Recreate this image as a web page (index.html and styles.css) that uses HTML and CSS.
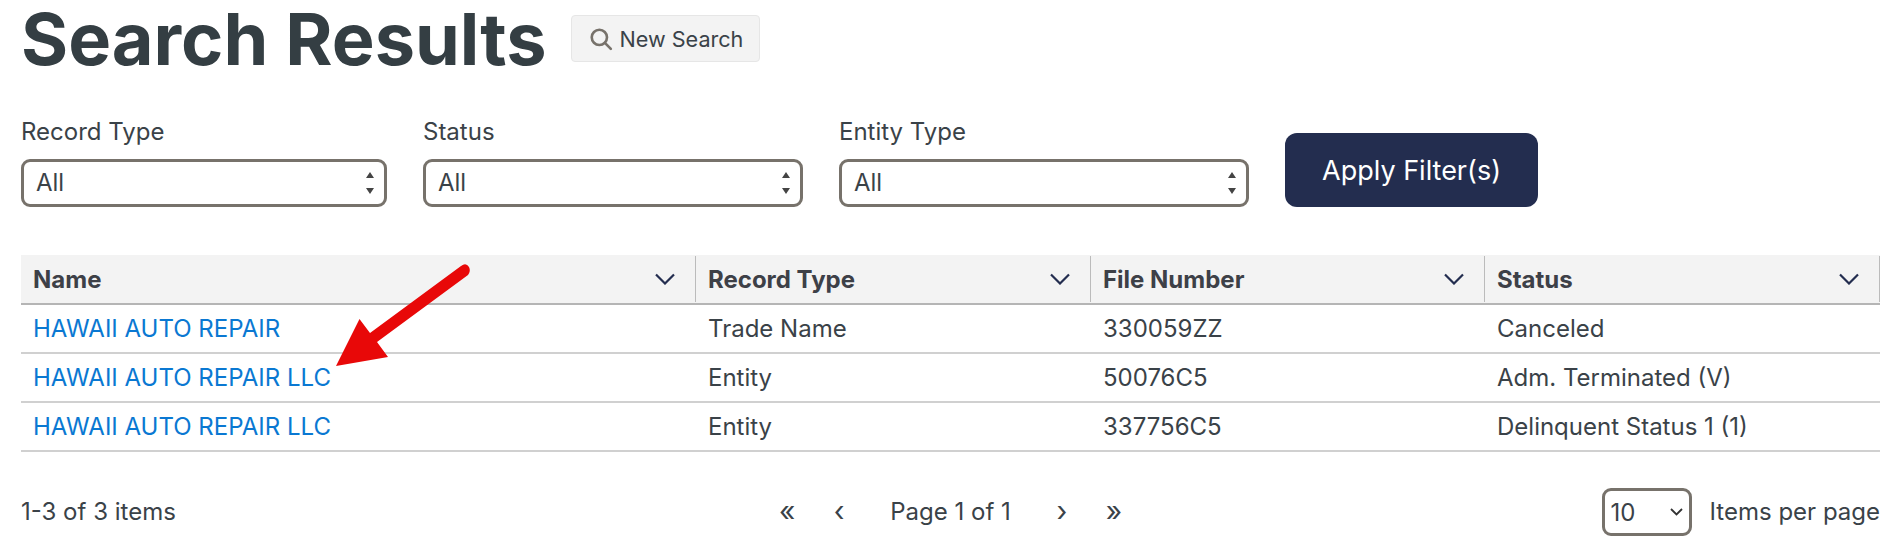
FILE: index.html
```html
<!doctype html>
<html>
    <head>
        <title>Search Results</title>
        <link rel="stylesheet" href="styles.css">
    </head>
    <body>
        <main>
            <header class="title-row">
                <h1>Search Results</h1>
                <a class="new-search" href="#">
                    <svg width="24" height="24" viewBox="0 0 22 22" fill="none" stroke="#77726b" stroke-width="2.4" stroke-linecap="round">
                        <circle cx="9.5" cy="9.5" r="7"/>
                        <line x1="14.8" y1="14.8" x2="20" y2="20"/>
                    </svg>
                    New Search
                </a>
            </header>
            <form class="filters">
                <div class="filter record">
                    <label>Record Type</label>
                    <div class="select-wrap">
                        <select><option>All</option></select>
                        <svg class="stepper" width="10" height="24" viewBox="0 0 10 24"><path d="M5 1 9 7H1zM5 23 1 17h8z" fill="#444"/></svg>
                    </div>
                </div>
                <div class="filter status">
                    <label>Status</label>
                    <div class="select-wrap">
                        <select><option>All</option></select>
                        <svg class="stepper" width="10" height="24" viewBox="0 0 10 24"><path d="M5 1 9 7H1zM5 23 1 17h8z" fill="#444"/></svg>
                    </div>
                </div>
                <div class="filter entity">
                    <label>Entity Type</label>
                    <div class="select-wrap">
                        <select><option>All</option></select>
                        <svg class="stepper" width="10" height="24" viewBox="0 0 10 24"><path d="M5 1 9 7H1zM5 23 1 17h8z" fill="#444"/></svg>
                    </div>
                </div>
                <button class="apply" type="button">Apply Filter(s)</button>
            </form>
            <div class="results">
                <table>
                    <thead>
                        <tr>
                            <th class="col-name"><div class="th-inner">Name <svg width="22" height="12" viewBox="0 0 22 12" fill="none" stroke="#232d4f" stroke-width="2.2"><path d="M2 1.500 11 10.500 20 1.500"/></svg></div></th>
                            <th class="col-type"><div class="th-inner">Record Type <svg width="22" height="12" viewBox="0 0 22 12" fill="none" stroke="#232d4f" stroke-width="2.2"><path d="M2 1.500 11 10.500 20 1.500"/></svg></div></th>
                            <th class="col-file"><div class="th-inner">File Number <svg width="22" height="12" viewBox="0 0 22 12" fill="none" stroke="#232d4f" stroke-width="2.2"><path d="M2 1.500 11 10.500 20 1.500"/></svg></div></th>
                            <th><div class="th-inner">Status <svg width="22" height="12" viewBox="0 0 22 12" fill="none" stroke="#232d4f" stroke-width="2.2"><path d="M2 1.500 11 10.500 20 1.500"/></svg></div></th>
                        </tr>
                    </thead>
                    <tbody>
                        <tr>
                            <td><a href="#">HAWAII AUTO REPAIR</a></td>
                            <td>Trade Name</td>
                            <td>330059ZZ</td>
                            <td>Canceled</td>
                        </tr>
                        <tr>
                            <td><a href="#">HAWAII AUTO REPAIR LLC</a></td>
                            <td>Entity</td>
                            <td>50076C5</td>
                            <td>Adm. Terminated (V)</td>
                        </tr>
                        <tr>
                            <td><a href="#">HAWAII AUTO REPAIR LLC</a></td>
                            <td>Entity</td>
                            <td>337756C5</td>
                            <td>Delinquent Status 1 (1)</td>
                        </tr>
                    </tbody>
                </table>
                <svg class="arrow" width="150" height="110" viewBox="326 262 150 110">
                    <path d="M461 266Q466 262 469 267Q471 271 468 275L377 342 388 357 336 366 359.500 319 370 333z" fill="#e80808"/>
                </svg>
            </div>
            <footer class="pager-row">
                <div class="count">1-3 of 3 items</div>
                <nav class="pager">
                    <a href="#">&laquo;</a>
                    <a href="#">&lsaquo;</a>
                    <span class="page-label">Page 1 of 1</span>
                    <a href="#">&rsaquo;</a>
                    <a href="#">&raquo;</a>
                </nav>
                <div class="per-page">
                    <div class="select-wrap">
                        <select><option>10</option></select>
                        <svg class="chevron" width="13" height="8" viewBox="0 0 13 8" fill="none" stroke="#333" stroke-width="1.800"><path d="M1 1 6.500 6.500 12 1"/></svg>
                    </div>
                    <span class="per-page-label">Items per page</span>
                </div>
            </footer>
        </main>
    </body>
</html>
```

FILE: styles.css
```css
html {
    background: white;
    font-family: Inter, "Liberation Sans", sans-serif;
    color: #3a4248;
}
body {
    margin: 0;
    font-size: 24px;
}
main {
    padding: 0 11px 0 21px;
}
a {
    text-decoration: none;
}
.title-row {
    display: flex;
    align-items: center;
    height: 77px;
    gap: 24px;
}
h1 {
    margin: 0;
    font-size: 72px;
    font-weight: 700;
    color: #343e43;
    line-height: 77px;
}
.new-search {
    display: flex;
    align-items: center;
    gap: 7px;
    height: 47px;
    box-sizing: border-box;
    padding: 0 16px 0 17px;
    background: #f3f3f3;
    border: 1px solid #e6e6e6;
    border-radius: 4px;
    color: #3a4248;
    font-size: 21.6px;
}
.filters {
    display: flex;
    align-items: flex-end;
    margin-top: 43px;
}
.filter label {
    display: block;
    line-height: 24px;
    margin-bottom: 15px;
}
.record {
    width: 366px;
    margin-right: 36px;
}
.status {
    width: 380px;
    margin-right: 36px;
}
.entity {
    width: 410px;
    margin-right: 36px;
}
.select-wrap {
    position: relative;
}
select {
    display: block;
    appearance: none;
    font: inherit;
    color: inherit;
    background: white;
    border: 3px solid #77726b;
    border-radius: 9px;
    height: 48px;
    width: 100%;
    padding: 0 12px 2px;
}
.stepper {
    position: absolute;
    right: 12px;
    top: 12px;
}
.chevron {
    position: absolute;
    right: 9px;
    top: 20px;
}
.apply {
    width: 253px;
    height: 74px;
    background: #232d4f;
    color: white;
    border: 0;
    border-radius: 12px;
    font: inherit;
    font-size: 27px;
}
.results {
    position: relative;
    margin-top: 48px;
}
.arrow {
    position: absolute;
    left: 305px;
    top: 7px;
}
table {
    width: 1859px;
    border-collapse: collapse;
    table-layout: fixed;
}
.col-name {
    width: 675px;
}
.col-type {
    width: 395px;
}
.col-file {
    width: 394px;
}
th {
    background: #f3f3f3;
    border-bottom: 2px solid #b5b5b5;
    padding: 0;
    height: 48px;
    text-align: left;
    font-weight: 700;
    color: #3d4047;
}
.th-inner {
    display: flex;
    justify-content: space-between;
    align-items: center;
    height: 46px;
    padding: 0 19px 0 12px;
    border-right: 1px solid #bbb;
}
td {
    height: 47px;
    padding: 0 12px;
    border-bottom: 2px solid #d0d0d0;
}
td a {
    color: #0a78d2;
}
.pager-row {
    display: grid;
    grid-template-columns: 1fr auto 1fr;
    align-items: center;
    width: 1859px;
    margin-top: 36px;
}
.count,
.pager,
.per-page-label {
    padding-bottom: 2px;
}
.pager {
    display: flex;
    align-items: center;
    gap: 16px;
}
.pager a {
    width: 36px;
    text-align: center;
    color: #3a4248;
    font-size: 28px;
    line-height: 28px;
}
.page-label {
    padding: 0 17px;
}
.per-page {
    display: flex;
    align-items: center;
    justify-content: flex-end;
    gap: 18px;
}
.per-page .select-wrap {
    width: 90px;
}
.per-page select {
    padding: 0 6px 0;
}
```
